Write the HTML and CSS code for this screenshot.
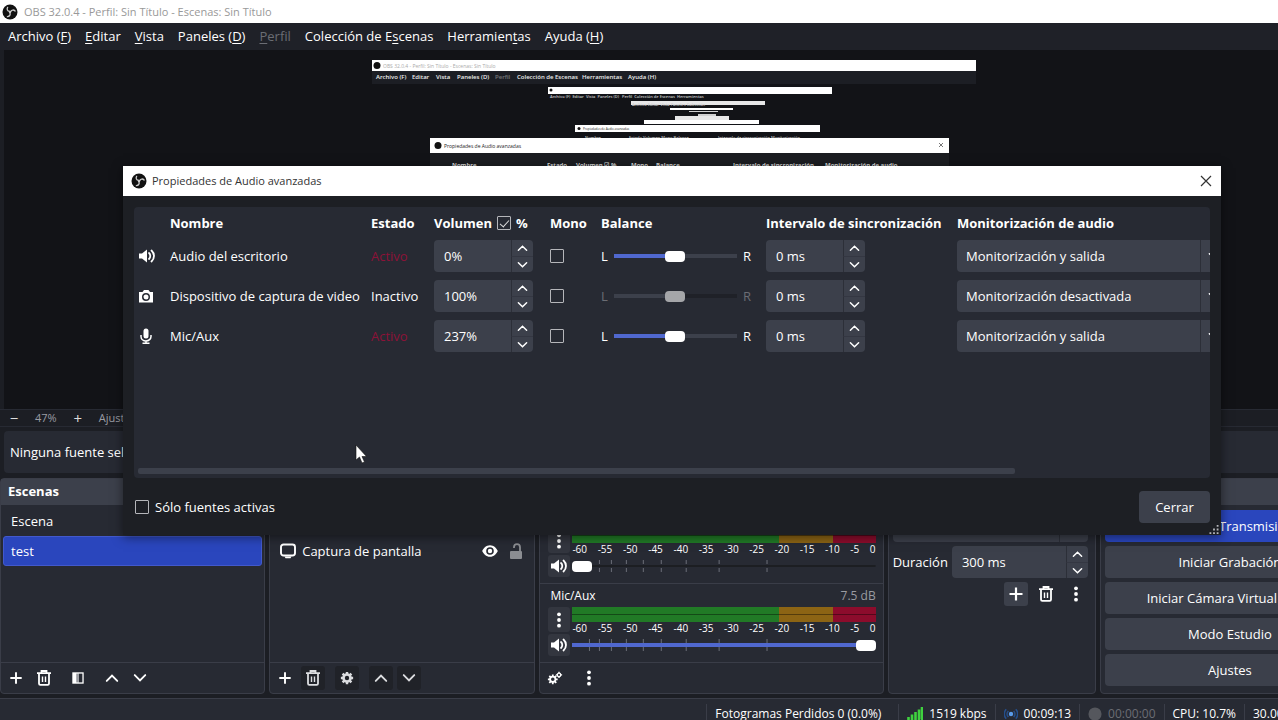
FILE: index.html
```html
<!DOCTYPE html>
<html lang="es">
<head>
    <meta charset="UTF-8">
    <meta name="viewport" content="width=device-width, initial-scale=1.0">
    <title>OBS 32.0.4 - Perfil: Sin Título - Escenas: Sin Título</title>
    <link rel="stylesheet" href="styles.css">
</head>
<body>
    <!-- Shared icons -->
    <svg class="icon-defs" aria-hidden="true">
        <symbol id="i-obs" viewBox="0 0 16 16">
            <circle cx="8" cy="8" r="7.500" fill="#111"/>
            <path d="M7.600 7.400C5.400 7 4.600 5.300 5.600 3.400M8.700 7.600C9.800 5.700 11.700 5.500 13.100 7M8 8.900C8.600 11 7.500 12.500 5.400 12.600" fill="none" stroke="#ccc" stroke-width="1.300" stroke-linecap="round"/>
            <circle cx="8" cy="8" r="1.200" fill="#ccc"/>
        </symbol>
        <symbol id="i-speaker" viewBox="0 0 18 16">
            <path d="M1 5.500h3L9 1.500v13l-5-4H1z" fill="currentColor"/>
            <path d="M11 5c1.700 1.500 1.700 4.500 0 6M13.500 2.500c3.300 3 3.300 8 0 11" fill="none" stroke="currentColor" stroke-width="1.800" stroke-linecap="round"/>
        </symbol>
        <symbol id="i-camera" viewBox="0 0 16 16">
            <path fill-rule="evenodd" d="M1 4h3.500L6 2h4.500L12 4h3v10.500H1zM8 5a4 4 0 1 0 0 8 4 4 0 0 0 0-8zm0 1.500a2.500 2.500 0 1 1 0 5 2.500 2.500 0 0 1 0-5z" fill="currentColor"/>
            <circle cx="8" cy="9" r="1.200" fill="currentColor"/>
        </symbol>
        <symbol id="i-mic" viewBox="0 0 16 16">
            <rect x="5.500" y="0.500" width="5" height="10" rx="2.500" fill="currentColor"/>
            <path d="M3 7v1.500a5 4.500 0 0 0 10 0V7M8 13v2.500M4.500 15.200h7" fill="none" stroke="currentColor" stroke-width="1.500"/>
        </symbol>
        <symbol id="i-up" viewBox="0 0 12 8">
            <path d="M1.500 6.500L6 2l4.500 4.500" fill="none" stroke="currentColor" stroke-width="1.600" stroke-linecap="round"/>
        </symbol>
        <symbol id="i-down" viewBox="0 0 12 8">
            <path d="M1.500 1.500L6 6l4.500-4.500" fill="none" stroke="currentColor" stroke-width="1.600" stroke-linecap="round"/>
        </symbol>
        <symbol id="i-plus" viewBox="0 0 16 16">
            <path d="M8 1.500v13M1.500 8h13" stroke="currentColor" stroke-width="2.200"/>
        </symbol>
        <symbol id="i-trash" viewBox="0 0 16 16">
            <path d="M1 3.200h14M5.500 2.500V1h5v1.500" fill="none" stroke="currentColor" stroke-width="1.800"/>
            <path d="M3 4v9.500c0 .8.500 1.300 1.300 1.300h7.400c.8 0 1.300-.5 1.300-1.300V4" fill="none" stroke="currentColor" stroke-width="1.800"/>
            <path d="M6.500 6.500v5.500M9.500 6.500v5.500" stroke="currentColor" stroke-width="1.400"/>
        </symbol>
        <symbol id="i-filter" viewBox="0 0 16 16">
            <rect x="1.500" y="1.500" width="13" height="13" fill="currentColor"/>
            <rect x="9" y="3" width="4" height="10" fill="#272a33"/>
            <rect x="6" y="3" width="3" height="10" fill="#999ba1"/>
        </symbol>
        <symbol id="i-gear" viewBox="0 0 16 16">
            <path d="M8 1v3M8 12v3M1 8h3M12 8h3M3 3l2.200 2.200M10.800 10.800L13 13M3 13l2.200-2.200M10.800 5.200L13 3" stroke="currentColor" stroke-width="2.800"/>
            <circle cx="8" cy="8" r="4" fill="none" stroke="currentColor" stroke-width="3"/>
        </symbol>
        <symbol id="i-gears" viewBox="0 0 18 16">
            <path d="M6.500 4v11M1 9.500h11M2.600 5.600l7.800 7.800M2.600 13.400l7.800-7.800" stroke="currentColor" stroke-width="2"/>
            <circle cx="6.500" cy="9.500" r="3" fill="#272a33" stroke="currentColor" stroke-width="2"/>
            <path d="M13.500 1v7M10 4.500h7" stroke="currentColor" stroke-width="1.500"/>
            <circle cx="13.500" cy="4.500" r="1.900" fill="#272a33" stroke="currentColor" stroke-width="1.500"/>
        </symbol>
        <symbol id="i-dots" viewBox="0 0 16 16">
            <circle cx="8" cy="2.300" r="1.900" fill="currentColor"/>
            <circle cx="8" cy="8" r="1.900" fill="currentColor"/>
            <circle cx="8" cy="13.700" r="1.900" fill="currentColor"/>
        </symbol>
        <symbol id="i-screen" viewBox="0 0 16 16">
            <rect x="1" y="1.500" width="14" height="11" rx="2.500" fill="none" stroke="currentColor" stroke-width="1.900"/>
            <path d="M4.500 13.500h7l-1 1.800h-5z" fill="currentColor"/>
        </symbol>
        <symbol id="i-eye" viewBox="0 0 16 16">
            <path fill-rule="evenodd" d="M8 2.200c3.800 0 6.600 3 7.800 5.800-1.200 2.800-4 5.800-7.800 5.800S1.400 10.800.2 8C1.400 5.200 4.200 2.200 8 2.200zM8 4.200a3.800 3.800 0 1 0 0 7.600 3.800 3.800 0 0 0 0-7.600z" fill="currentColor"/>
            <circle cx="8" cy="8" r="2.200" fill="currentColor"/>
        </symbol>
        <symbol id="i-unlock" viewBox="0 0 16 16">
            <rect x="2" y="8" width="12" height="8" rx="1" fill="currentColor"/>
            <path d="M12 8V4.200a3 3 0 0 0-6 0V5" fill="none" stroke="currentColor" stroke-width="1.800"/>
        </symbol>
        <symbol id="i-close" viewBox="0 0 12 12">
            <path d="M1 1l10 10M11 1L1 11" stroke="currentColor" stroke-width="1.200"/>
        </symbol>
    </svg>

    <div class="window">
        <header class="titlebar">
            <svg class="icon"><use href="#i-obs"/></svg>
            <span>OBS 32.0.4 - Perfil: Sin Título - Escenas: Sin Título</span>
        </header>

        <nav class="menubar">
            <button type="button">Archivo (<u>F</u>)</button>
            <button type="button"><u>E</u>ditar</button>
            <button type="button"><u>V</u>ista</button>
            <button type="button">Paneles (<u>D</u>)</button>
            <button type="button" disabled><u>P</u>erfil</button>
            <button type="button">Colección de E<u>s</u>cenas</button>
            <button type="button">Herramien<u>t</u>as</button>
            <button type="button">Ayuda (<u>H</u>)</button>
        </nav>

        <main class="preview">
            <svg class="capture" viewBox="0 0 604 340">
                <rect width="604" height="340" fill="#121317"/>
                <rect y="11" width="604" height="13" fill="#1c1e24"/>
                <rect width="604" height="11" fill="#fff"/>
                <circle cx="5" cy="5.500" r="3.500" fill="#111"/>
                <text x="11" y="8" class="cap-title">OBS 32.0.4 - Perfil: Sin Título - Escenas: Sin Título</text>
                <g class="cap-menu">
                    <text x="4" y="19">Archivo (F)</text>
                    <text x="40" y="19">Editar</text>
                    <text x="64" y="19">Vista</text>
                    <text x="85" y="19">Paneles (D)</text>
                    <text x="123" y="19" opacity=".4">Perfil</text>
                    <text x="145" y="19">Colección de Escenas</text>
                    <text x="210" y="19">Herramientas</text>
                    <text x="256" y="19">Ayuda (H)</text>
                </g>
                <g fill="#fff">
                    <rect x="176" y="27" width="284" height="7"/>
                    <rect x="259" y="41" width="134" height="4" opacity=".9"/>
                    <rect x="298" y="48" width="63" height="2"/>
                    <rect x="317" y="51" width="29" height="1" opacity=".8"/>
                    <rect x="326" y="54" width="18" height="2" opacity=".8"/>
                    <rect x="303" y="56" width="54" height="4" opacity=".9"/>
                    <rect x="272" y="60" width="115" height="4"/>
                    <rect x="203" y="65" width="245" height="7"/>
                </g>
                <circle cx="179" cy="30" r="1.500" fill="#111"/>
                <circle cx="207" cy="68.500" r="1.500" fill="#111"/>
                <text x="178" y="38" class="cap-tiny">Archivo (F)  Editar  Vista  Paneles (D)   Perfil  Colección de Escenas  Herramientas</text>
                <text x="260" y="46" class="cap-tiny">Archivo Editar Vista Paneles Colección</text>
                <text x="211" y="70" class="cap-dialog-tiny">Propiedades de Audio avanzadas</text>
                <g class="cap-tiny">
                    <text x="213" y="79">Nombre</text>
                    <text x="257" y="79">Estado   Volumen   Mono  Balance</text>
                    <text x="346" y="79">Intervalo de sincronización  Monitorización</text>
                </g>
                <rect x="58" y="93" width="519" height="150" fill="#1c1e22"/>
                <rect x="58" y="78" width="519" height="15" fill="#fff"/>
                <circle cx="66" cy="85.500" r="3.500" fill="#111"/>
                <text x="72" y="88" class="cap-dialog">Propiedades de Audio avanzadas</text>
                <path d="M567 83l4 4M571 83l-4 4" stroke="#555" stroke-width=".8"/>
                <g class="cap-head">
                    <text x="80" y="107">Nombre</text>
                    <text x="175" y="107">Estado</text>
                    <text x="204" y="107">Volumen ☑ %</text>
                    <text x="259" y="107">Mono</text>
                    <text x="284" y="107">Balance</text>
                    <text x="361" y="107">Intervalo de sincronización</text>
                    <text x="453" y="107">Monitorización de audio</text>
                </g>
            </svg>
        </main>

        <div class="zoombar">
            <button type="button" aria-label="Alejar">−</button>
            <span>47%</span>
            <button type="button" aria-label="Acercar">+</button>
            <button type="button">Ajustar a la ventana</button>
        </div>

        <div class="contextbar">Ninguna fuente seleccionada</div>

        <div class="docks">
            <section class="dock">
                <h2>Escenas</h2>
                <div class="dock-body list">
                    <button type="button" class="row">Escena</button>
                    <button type="button" class="row selected">test</button>
                </div>
                <div class="dock-footer">
                    <button type="button" aria-label="Añadir escena"><svg class="icon-sm"><use href="#i-plus"/></svg></button>
                    <button type="button" aria-label="Eliminar escena"><svg class="icon"><use href="#i-trash"/></svg></button>
                    <button type="button" class="wide" aria-label="Filtros"><svg class="icon-sm"><use href="#i-filter"/></svg></button>
                    <button type="button" aria-label="Subir"><svg class="arrow"><use href="#i-up"/></svg></button>
                    <button type="button" aria-label="Bajar"><svg class="arrow"><use href="#i-down"/></svg></button>
                </div>
            </section>

            <section class="dock">
                <h2>Fuentes</h2>
                <div class="dock-body list">
                    <div class="row">Dispositivo de captura</div>
                    <div class="row source">
                        <svg class="icon"><use href="#i-screen"/></svg>
                        <span>Captura de pantalla</span>
                        <button type="button" aria-label="Mostrar u ocultar"><svg class="icon"><use href="#i-eye"/></svg></button>
                        <button type="button" class="unlocked" aria-label="Bloquear"><svg class="icon"><use href="#i-unlock"/></svg></button>
                    </div>
                </div>
                <div class="dock-footer shaded">
                    <button type="button" class="plain" aria-label="Añadir fuente"><svg class="icon-sm"><use href="#i-plus"/></svg></button>
                    <button type="button" aria-label="Eliminar fuente"><svg class="icon"><use href="#i-trash"/></svg></button>
                    <button type="button" class="wide" aria-label="Propiedades"><svg class="icon-sm"><use href="#i-gear"/></svg></button>
                    <button type="button" aria-label="Subir"><svg class="arrow"><use href="#i-up"/></svg></button>
                    <button type="button" aria-label="Bajar"><svg class="arrow"><use href="#i-down"/></svg></button>
                </div>
            </section>

            <section class="dock">
                <h2>Mezclador de audio</h2>
                <div class="dock-body">
                    <div class="channel">
                        <div class="channel-name"><span>Audio del escritorio</span><span class="db">-inf dB</span></div>
                        <button type="button" class="more" aria-label="Opciones"><svg class="icon"><use href="#i-dots"/></svg></button>
                        <div class="meter-box">
                            <div class="meter"></div>
                            <div class="scale"><span>-60</span><span>-55</span><span>-50</span><span>-45</span><span>-40</span><span>-35</span><span>-30</span><span>-25</span><span>-20</span><span>-15</span><span>-10</span><span>-5</span><span>0</span></div>
                        </div>
                        <button type="button" class="mute" aria-label="Silenciar"><svg class="speaker"><use href="#i-speaker"/></svg></button>
                        <div class="fader">
                            <svg viewBox="0 0 304 16" preserveAspectRatio="none"><path d="M27.500 2v4M39.500 2v4M54.500 2v4M71.500 2v4M89.500 2v4M114.500 2v4M147.500 2v4M195.500 2v4M27.500 10v4M39.500 10v4M54.500 10v4M71.500 10v4M89.500 10v4M114.500 10v4M147.500 10v4M195.500 10v4" stroke="#6b6e78"/></svg>
                            <input type="range" class="slider empty" min="0" max="100" value="0" aria-label="Volumen de Audio del escritorio">
                        </div>
                    </div>
                    <div class="channel">
                        <div class="channel-name"><span>Mic/Aux</span><span class="db">7.5 dB</span></div>
                        <button type="button" class="more" aria-label="Opciones"><svg class="icon"><use href="#i-dots"/></svg></button>
                        <div class="meter-box">
                            <div class="meter"></div>
                            <div class="scale"><span>-60</span><span>-55</span><span>-50</span><span>-45</span><span>-40</span><span>-35</span><span>-30</span><span>-25</span><span>-20</span><span>-15</span><span>-10</span><span>-5</span><span>0</span></div>
                        </div>
                        <button type="button" class="mute" aria-label="Silenciar"><svg class="speaker"><use href="#i-speaker"/></svg></button>
                        <div class="fader">
                            <svg viewBox="0 0 304 16" preserveAspectRatio="none"><path d="M17.500 2v12M27.500 2v12M39.500 2v12M54.500 2v12M71.500 2v12M89.500 2v12M114.500 2v12M147.500 2v12M195.500 2v12" stroke="#6b6e78"/></svg>
                            <input type="range" class="slider full" min="0" max="100" value="100" aria-label="Volumen de Mic/Aux">
                        </div>
                    </div>
                </div>
                <div class="dock-footer">
                    <button type="button" aria-label="Propiedades de audio avanzadas"><svg class="icon"><use href="#i-gears"/></svg></button>
                    <button type="button" class="wide" aria-label="Más"><svg class="icon"><use href="#i-dots"/></svg></button>
                </div>
            </section>

            <section class="dock">
                <h2>Transiciones de escena</h2>
                <div class="dock-body transitions">
                    <div class="combo">
                        <select aria-label="Transición"><option>Desvanecimiento</option></select>
                    </div>
                    <div class="duration">
                        <label for="duration">Duración</label>
                        <div class="spin">
                            <input type="text" id="duration" value="300 ms">
                            <button type="button" aria-label="Más"><svg><use href="#i-up"/></svg></button>
                            <button type="button" aria-label="Menos"><svg><use href="#i-down"/></svg></button>
                        </div>
                    </div>
                    <div class="transition-tools">
                        <button type="button" class="filled" aria-label="Añadir transición"><svg class="icon"><use href="#i-plus"/></svg></button>
                        <button type="button" aria-label="Eliminar transición"><svg class="icon"><use href="#i-trash"/></svg></button>
                        <button type="button" aria-label="Opciones"><svg class="icon"><use href="#i-dots"/></svg></button>
                    </div>
                </div>
            </section>

            <section class="dock">
                <h2>Controles</h2>
                <div class="dock-body controls">
                    <button type="button" class="live">Detener Transmisión</button>
                    <button type="button">Iniciar Grabación</button>
                    <div class="camera">
                        <button type="button">Iniciar Cámara Virtual</button>
                        <button type="button" aria-label="Configurar cámara virtual"><svg class="icon"><use href="#i-gear"/></svg></button>
                    </div>
                    <button type="button">Modo Estudio</button>
                    <button type="button">Ajustes</button>
                </div>
            </section>
        </div>

        <footer class="statusbar">
            <div class="frames">Fotogramas Perdidos 0 (0.0%)</div>
            <div>
                <svg class="icon" viewBox="0 0 16 16"><path d="M1.500 11v4M5 8.500v6.500M8.500 6v9M12 3.500V15M15 1v14" stroke="#3fd13f" stroke-width="2.600"/></svg>
                <span>1519 kbps</span>
            </div>
            <div>
                <svg class="icon-sm" viewBox="0 0 16 16"><circle cx="8" cy="8" r="2.500" fill="#5b9be8"/><path d="M5 4.500a5 5 0 0 0 0 7M11 4.500a5 5 0 0 1 0 7M2.500 2.500a8 8 0 0 0 0 11M13.500 2.500a8 8 0 0 1 0 11" fill="none" stroke="#254f8c" stroke-width="1.800"/></svg>
                <span>00:09:13</span>
            </div>
            <div class="idle">
                <svg class="icon-sm" viewBox="0 0 16 16"><circle cx="8" cy="8" r="7.500" fill="#55575d"/></svg>
                <span>00:00:00</span>
            </div>
            <div>CPU: 10.7%</div>
            <div class="fps">30.00 / 30.00 FPS</div>
        </footer>
    </div>

    <div class="dialog" role="dialog" aria-labelledby="dialogTitle">
        <div class="dialog-title">
            <svg class="icon"><use href="#i-obs"/></svg>
            <span id="dialogTitle">Propiedades de Audio avanzadas</span>
            <button type="button" aria-label="Cerrar ventana"><svg><use href="#i-close"/></svg></button>
        </div>

        <div class="sources">
            <table>
                <colgroup>
                    <col class="c-icon"><col class="c-name"><col class="c-state"><col class="c-volume"><col class="c-mono"><col class="c-balance"><col class="c-sync"><col class="c-monitor">
                </colgroup>
                <thead>
                    <tr>
                        <th></th>
                        <th>Nombre</th>
                        <th>Estado</th>
                        <th><label class="percent">Volumen <input type="checkbox" checked> %</label></th>
                        <th>Mono</th>
                        <th>Balance</th>
                        <th>Intervalo de sincronización</th>
                        <th>Monitorización de audio</th>
                    </tr>
                </thead>
                <tbody>
                    <tr>
                        <td><svg class="speaker"><use href="#i-speaker"/></svg></td>
                        <td>Audio del escritorio</td>
                        <td class="active">Activo</td>
                        <td>
                            <div class="spin">
                                <input type="text" value="0%" aria-label="Volumen">
                                <button type="button" aria-label="Más"><svg><use href="#i-up"/></svg></button>
                                <button type="button" aria-label="Menos"><svg><use href="#i-down"/></svg></button>
                            </div>
                        </td>
                        <td><input type="checkbox" aria-label="Mono"></td>
                        <td><div class="balance"><span>L</span><input type="range" class="slider half" value="50" aria-label="Balance"><span>R</span></div></td>
                        <td>
                            <div class="spin">
                                <input type="text" value="0 ms" aria-label="Intervalo de sincronización">
                                <button type="button" aria-label="Más"><svg><use href="#i-up"/></svg></button>
                                <button type="button" aria-label="Menos"><svg><use href="#i-down"/></svg></button>
                            </div>
                        </td>
                        <td><div class="combo"><select aria-label="Monitorización"><option>Monitorización y salida</option></select><svg><use href="#i-down"/></svg></div></td>
                    </tr>
                    <tr>
                        <td><svg class="icon"><use href="#i-camera"/></svg></td>
                        <td>Dispositivo de captura de video</td>
                        <td>Inactivo</td>
                        <td>
                            <div class="spin">
                                <input type="text" value="100%" aria-label="Volumen">
                                <button type="button" aria-label="Más"><svg><use href="#i-up"/></svg></button>
                                <button type="button" aria-label="Menos"><svg><use href="#i-down"/></svg></button>
                            </div>
                        </td>
                        <td><input type="checkbox" aria-label="Mono"></td>
                        <td><div class="balance off"><span>L</span><input type="range" class="slider half" value="50" disabled aria-label="Balance"><span>R</span></div></td>
                        <td>
                            <div class="spin">
                                <input type="text" value="0 ms" aria-label="Intervalo de sincronización">
                                <button type="button" aria-label="Más"><svg><use href="#i-up"/></svg></button>
                                <button type="button" aria-label="Menos"><svg><use href="#i-down"/></svg></button>
                            </div>
                        </td>
                        <td><div class="combo"><select aria-label="Monitorización"><option>Monitorización desactivada</option></select><svg><use href="#i-down"/></svg></div></td>
                    </tr>
                    <tr>
                        <td><svg class="icon"><use href="#i-mic"/></svg></td>
                        <td>Mic/Aux</td>
                        <td class="active">Activo</td>
                        <td>
                            <div class="spin">
                                <input type="text" value="237%" aria-label="Volumen">
                                <button type="button" aria-label="Más"><svg><use href="#i-up"/></svg></button>
                                <button type="button" aria-label="Menos"><svg><use href="#i-down"/></svg></button>
                            </div>
                        </td>
                        <td><input type="checkbox" aria-label="Mono"></td>
                        <td><div class="balance"><span>L</span><input type="range" class="slider half" value="50" aria-label="Balance"><span>R</span></div></td>
                        <td>
                            <div class="spin">
                                <input type="text" value="0 ms" aria-label="Intervalo de sincronización">
                                <button type="button" aria-label="Más"><svg><use href="#i-up"/></svg></button>
                                <button type="button" aria-label="Menos"><svg><use href="#i-down"/></svg></button>
                            </div>
                        </td>
                        <td><div class="combo"><select aria-label="Monitorización"><option>Monitorización y salida</option></select><svg><use href="#i-down"/></svg></div></td>
                    </tr>
                </tbody>
            </table>
            <div class="scrollbar"></div>
        </div>

        <div class="dialog-footer">
            <label><input type="checkbox"> Sólo fuentes activas</label>
            <button type="button">Cerrar</button>
        </div>
        <svg class="grip" viewBox="0 0 10 10"><path d="M8 0h2v2H8zM4 4h2v2H4zM8 4h2v2H8zM0 8h2v2H0zM4 8h2v2H4zM8 8h2v2H8z" fill="#b5b6ba"/></svg>
    </div>

    <svg class="cursor" viewBox="0 0 12 20"><path d="M1 1v15l3.500-3 2.500 6 2.500-1-2.500-5.500h4.500z" fill="#fff" stroke="#111" stroke-width=".6"/></svg>
</body>
</html>
```
FILE: styles.css
```css
* {
    box-sizing: border-box;
}
body {
    margin: 0;
    min-height: 100vh;
    position: relative;
    overflow: hidden;
    background-color: #1c1e24;
    color: #fff;
    font-family: "Open Sans", "Noto Sans", sans-serif;
    font-size: 13px;
    line-height: 18px;
}
button,
input,
select {
    font: inherit;
    color: inherit;
    margin: 0;
}
button {
    background: none;
    border: none;
    padding: 0;
}
.icon-defs {
    display: none;
}
.icon {
    width: 16px;
    height: 16px;
    flex: none;
    display: block;
}
.icon-sm {
    width: 14px;
    height: 14px;
    flex: none;
    display: block;
}
.arrow {
    width: 14px;
    height: 10px;
    display: block;
}
.speaker {
    width: 18px;
    height: 16px;
    display: block;
}

/* The main window runs past the right and bottom edges of the screen */
.window {
    width: calc(100% + 82px);
    height: 100vh;
    min-height: 720px;
    display: flex;
    flex-direction: column;
    overflow: hidden;
}
.titlebar {
    flex: none;
    height: 23px;
    padding-left: 2px;
    display: flex;
    align-items: center;
    gap: 6px;
    background-color: #fff;
    color: #999;
    font-size: 11px;
}
.menubar {
    flex: none;
    height: 27px;
    padding: 0 8px 1px;
    display: flex;
    align-items: center;
    gap: 14px;
    background-color: #1f2128;
}
.menubar u {
    text-underline-offset: 2px;
}
.menubar button:disabled {
    color: #6b6d74;
}
.preview {
    flex: 1;
    min-height: 0;
    margin-left: 4px;
    padding: 10px 16px 0 0;
    overflow: hidden;
    background-color: #121317;
}
.capture {
    display: block;
    width: 604px;
    margin: 0 auto;
}
.cap-title {
    font-size: 5px;
    fill: #aaa;
}
.cap-menu {
    font-size: 6px;
    font-weight: 600;
    fill: #eee;
}
.cap-tiny {
    font-size: 4px;
    font-weight: 600;
    fill: #ccc;
    white-space: pre;
}
.cap-dialog {
    font-size: 5px;
    fill: #222;
}
.cap-dialog-tiny {
    font-size: 3px;
    fill: #222;
}
.cap-head {
    font-size: 6px;
    font-weight: 700;
    fill: #ddd;
}
.zoombar {
    flex: none;
    height: 18px;
    padding: 0 8px;
    display: flex;
    align-items: center;
    gap: 15px;
    border: solid #272a33;
    border-width: 1px 0;
    color: #9a9ca3;
    font-size: 11px;
    line-height: 16px;
}
.zoombar button:not(:last-child) {
    width: 12px;
    color: #ddd;
    font-size: 15px;
}
.contextbar {
    flex: none;
    height: 42px;
    margin: 4px 4px 5px;
    padding: 0 6px;
    display: flex;
    align-items: center;
    background-color: #272a33;
    border-radius: 4px;
}

/* Docks */
.docks {
    flex: none;
    display: grid;
    grid-template-columns: 265fr 266fr 344fr 208fr 260fr;
    gap: 4px;
}
.dock {
    display: flex;
    flex-direction: column;
    min-width: 0;
    height: 216px;
    background-color: #272a33;
    border: 1px solid #3a3d48;
    border-radius: 4px;
}
.dock h2 {
    flex: none;
    margin: 0;
    padding: 0 7px 2px;
    font-size: 13px;
    line-height: 24px;
    font-weight: 700;
    background-color: #3c404b;
}
.dock-body {
    flex: 1;
    min-height: 0;
}
.list {
    display: flex;
    flex-direction: column;
    padding: 1px 2px;
}
.row {
    flex: none;
    height: 30px;
    padding: 0 8px;
    display: flex;
    align-items: center;
    text-align: left;
    border-radius: 3px;
}
.row.selected {
    padding: 0 7px;
    background-color: #2a46bd;
    border: 1px solid #4259cc;
}
.source {
    gap: 6px;
}
.source span {
    flex: 1;
}
.source button + button {
    margin-left: 4px;
}
.unlocked {
    color: #8b8d92;
}
.dock-footer {
    flex: none;
    height: 31px;
    padding: 0 3px;
    display: flex;
    align-items: center;
    gap: 4px;
    border-top: 1px solid #3a3d48;
}
.dock-footer button {
    width: 24px;
    height: 24px;
    display: grid;
    place-items: center;
    border-radius: 3px;
}
.dock-footer .wide {
    margin: 0 6px;
}
.shaded button:not(.plain) {
    background-color: #202228;
    color: #dcdde0;
}

/* Mixer */
.channel {
    height: 79px;
    padding: 3px 7px 0 8px;
    display: grid;
    grid-template-columns: 24px 1fr;
    grid-template-rows: 20px 27px 22px;
    align-items: start;
    border-bottom: 1px solid #3a3d48;
}
.channel:last-child {
    border-bottom: none;
}
.channel-name {
    grid-column: 1 / -1;
    display: flex;
    justify-content: space-between;
    padding-left: 2px;
    font-size: 12px;
}
.db {
    color: #999ba1;
}
.more,
.mute {
    width: 22px;
    height: 22px;
    display: grid;
    place-items: center;
    background-color: #33363f;
    border-radius: 3px;
}
.more {
    height: 25px;
}
.meter {
    height: 15px;
    background: linear-gradient(#0000 7px, #0006 7px, #0006 8px, #0000 8px),
        linear-gradient(90deg, #217a26 68%, #8c6414 68%, #8c6414 86%, #8c0c2c 86%);
}
.scale {
    display: flex;
    justify-content: space-between;
    font-size: 10px;
    line-height: 12px;
}
.fader {
    display: grid;
    align-items: center;
}
.fader > * {
    grid-area: 1 / 1;
    width: 100%;
}
.fader svg {
    height: 16px;
}

/* Form controls */
.slider {
    appearance: none;
    min-width: 0;
    height: 22px;
    background: linear-gradient(#3c404b, #3c404b) center / 100% 4px no-repeat;
}
.slider.half {
    background: linear-gradient(90deg, #5068cf 50%, #3c404b 50%) center / 100% 4px no-repeat;
}
.slider.full {
    background: linear-gradient(#5068cf, #5068cf) center / 100% 4px no-repeat;
}
.slider.empty {
    background: linear-gradient(#1c1e22, #1c1e22) center / 100% 2px no-repeat;
}
.slider.half:disabled {
    background: linear-gradient(90deg, #3c404b 50%, #1f2128 50%) center / 100% 4px no-repeat;
}
.slider::-webkit-slider-thumb {
    appearance: none;
    width: 20px;
    height: 11px;
    border-radius: 4px;
    background-color: #fff;
}
.slider:disabled::-webkit-slider-thumb {
    background-color: #a5a6a9;
}
input[type="checkbox"] {
    appearance: none;
    width: 14px;
    height: 14px;
    border: 1px solid #b5b6ba;
    border-radius: 1px;
    display: grid;
    place-items: center;
}
input[type="checkbox"]:checked::before {
    content: "";
    width: 8px;
    height: 4px;
    border: solid #ddd;
    border-width: 0 0 1px 1px;
    transform: rotate(-48deg);
}
.spin {
    display: grid;
    grid-template-columns: 1fr 22px;
    grid-template-rows: 16px 16px;
    width: 99px;
    background-color: #3c404b;
    border-radius: 4px;
    overflow: hidden;
}
.spin input {
    grid-row: 1 / 3;
    width: 100%;
    min-width: 0;
    padding: 0 10px;
    border: none;
    background: none;
}
.spin button {
    grid-column: 2;
    display: grid;
    place-items: center;
    border-left: 1px solid #2c2f38;
}
.spin button + button {
    border-top: 1px solid #343742;
}
.spin svg,
.combo svg {
    width: 11px;
    height: 8px;
}
.combo {
    display: grid;
    grid-template-columns: 1fr 21px;
    align-items: center;
    background-color: #3c404b;
    border-radius: 4px;
}
.combo select {
    grid-area: 1 / 1 / 2 / 3;
    width: 100%;
    height: 32px;
    padding: 0 9px;
    appearance: none;
    border: none;
    border-radius: 4px;
    background: linear-gradient(#2c2f38, #2c2f38) right 28px top / 1px 100% no-repeat;
}
.combo svg {
    grid-area: 1 / 2;
}

.transitions {
    padding: 5px 7px 0 4px;
}
.duration {
    display: flex;
    align-items: center;
    gap: 4px;
    margin-top: 4px;
}
.duration .spin {
    flex: 1;
}
.transition-tools {
    display: flex;
    justify-content: flex-end;
    gap: 6px;
    margin-top: 4px;
}
.transition-tools button {
    width: 24px;
    height: 24px;
    display: grid;
    place-items: center;
    border-radius: 3px;
}
.transition-tools .filled {
    background-color: #3c404b;
}
.controls {
    padding: 5px 4px;
    display: flex;
    flex-direction: column;
    gap: 4px;
}
.controls button {
    height: 32px;
    border-radius: 4px;
    background-color: #3c404b;
}
.controls .live {
    background-color: #2a46bd;
}
.camera {
    display: grid;
    grid-template-columns: 1fr 32px;
    gap: 4px;
}
.camera svg {
    margin: auto;
}

.statusbar {
    flex: none;
    height: 22px;
    margin-top: 4px;
    padding-top: 5px;
    display: flex;
    justify-content: flex-end;
    overflow: hidden;
    background-color: #272a33;
    border-top: 1px solid #3a3d48;
    font-size: 12px;
}
.statusbar div {
    display: flex;
    flex: none;
    align-items: center;
    gap: 6px;
    height: 20px;
    padding: 0 8px;
    border-left: 1px solid #3a3d48;
}
.statusbar .frames {
    width: 192px;
}
.statusbar .idle {
    color: #6b6d74;
}
.statusbar .fps {
    width: 116px;
}

/* Advanced audio properties */
.dialog {
    position: absolute;
    top: 166px;
    left: 123px;
    right: 57px;
    background-color: #1d1f24;
    box-shadow: 0 2px 10px rgba(0, 0, 0, 0.5);
}
.dialog-title {
    height: 30px;
    padding: 0 9px 0 8px;
    display: flex;
    align-items: center;
    gap: 5px;
    background-color: #fff;
    color: #333;
    font-size: 11px;
}
.dialog-title button {
    margin-left: auto;
    width: 12px;
    height: 12px;
}
.dialog-title button svg {
    display: block;
    width: 12px;
    height: 12px;
}
.sources {
    height: 271px;
    margin: 11px 11px 0;
    display: flex;
    flex-direction: column;
    justify-content: space-between;
    overflow: hidden;
    background-color: #272a33;
    border-radius: 4px;
}
table {
    width: 1095px;
    table-layout: fixed;
    border-collapse: collapse;
}
th,
td {
    padding: 0;
    height: 40px;
    text-align: left;
    white-space: nowrap;
}
th {
    height: 29px;
    padding-top: 2px;
    font-weight: 700;
}
td:first-child svg {
    margin-left: 4px;
}
.c-icon {
    width: 36px;
}
.c-name {
    width: 201px;
}
.c-state {
    width: 63px;
}
.c-volume {
    width: 116px;
}
.c-mono {
    width: 51px;
}
.c-balance {
    width: 165px;
}
.c-sync {
    width: 191px;
}
.c-monitor {
    width: 272px;
}
.percent {
    display: flex;
    align-items: center;
    gap: 5px;
}
.active {
    color: #8c1238;
}
.balance {
    display: flex;
    align-items: center;
    gap: 6px;
    width: 150px;
}
.balance .slider {
    flex: 1;
}
.balance.off {
    color: #6b6d74;
}
.scrollbar {
    width: 877px;
    max-width: 82%;
    height: 6px;
    margin: 0 4px 4px;
    flex: none;
    background-color: #3c404b;
    border-radius: 2px;
}
.dialog-footer {
    height: 57px;
    padding: 0 11px 0 12px;
    display: flex;
    align-items: center;
    justify-content: space-between;
}
.dialog-footer label {
    display: flex;
    align-items: center;
    gap: 6px;
}
.dialog-footer button {
    width: 71px;
    height: 32px;
    border-radius: 4px;
    background-color: #3c404b;
}
.grip {
    position: absolute;
    right: 2px;
    bottom: 1px;
    width: 10px;
    height: 9px;
}
.cursor {
    position: absolute;
    top: 444px;
    left: 355px;
    width: 12px;
    height: 20px;
}
```
